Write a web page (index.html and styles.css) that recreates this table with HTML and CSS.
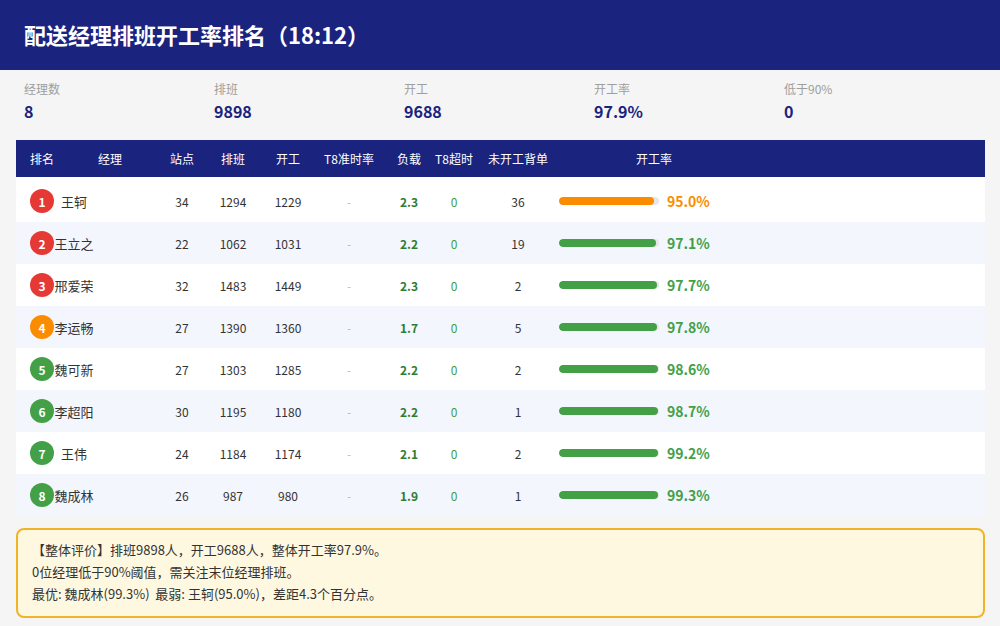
FILE: index.html
```html
<!DOCTYPE html>
<html lang="zh-CN">
<head>
<meta charset="utf-8">
<title>配送经理排班开工率排名</title>
<link rel="stylesheet" href="styles.css">
</head>
<body>
<header class="topbar">
  <h1 class="title">配送经理排班开工率排名（18:12）</h1>
</header>
<section class="stats">
  <div class="stat"><div class="stat-label">经理数</div><div class="stat-value">8</div></div>
  <div class="stat"><div class="stat-label">排班</div><div class="stat-value">9898</div></div>
  <div class="stat"><div class="stat-label">开工</div><div class="stat-value">9688</div></div>
  <div class="stat"><div class="stat-label">开工率</div><div class="stat-value">97.9%</div></div>
  <div class="stat"><div class="stat-label">低于90%</div><div class="stat-value">0</div></div>
</section>
<section class="table">
  <div class="thead">
    <div class="th th-rank">排名</div>
    <div class="th th-name">经理</div>
    <div class="th">站点</div>
    <div class="th">排班</div>
    <div class="th">开工</div>
    <div class="th">T8准时率</div>
    <div class="th spacer"></div>
    <div class="th">负载</div>
    <div class="th">T8超时</div>
    <div class="th">未开工背单</div>
    <div class="th th-rate">开工率</div>
  </div>
  <div class="tbody">
    <div class="tr">
      <div class="td td-rank"><span class="badge red">1</span></div>
      <div class="td td-name">王轲</div><div class="td spacer"></div>
      <div class="td">34</div><div class="td">1294</div><div class="td">1229</div>
      <div class="td dash">-</div><div class="td spacer"></div>
      <div class="td load">2.3</div><div class="td late">0</div><div class="td">36</div>
      <div class="td td-rate"><span class="bar"><span class="fill orange" style="width:95%"></span></span><span class="pct orange-t">95.0%</span></div>
    </div>
    <div class="tr">
      <div class="td td-rank"><span class="badge red">2</span></div>
      <div class="td td-name">王立之</div><div class="td spacer"></div>
      <div class="td">22</div><div class="td">1062</div><div class="td">1031</div>
      <div class="td dash">-</div><div class="td spacer"></div>
      <div class="td load">2.2</div><div class="td late">0</div><div class="td">19</div>
      <div class="td td-rate"><span class="bar"><span class="fill green" style="width:97.1%"></span></span><span class="pct green-t">97.1%</span></div>
    </div>
    <div class="tr">
      <div class="td td-rank"><span class="badge red">3</span></div>
      <div class="td td-name">邢爱荣</div><div class="td spacer"></div>
      <div class="td">32</div><div class="td">1483</div><div class="td">1449</div>
      <div class="td dash">-</div><div class="td spacer"></div>
      <div class="td load">2.3</div><div class="td late">0</div><div class="td">2</div>
      <div class="td td-rate"><span class="bar"><span class="fill green" style="width:97.7%"></span></span><span class="pct green-t">97.7%</span></div>
    </div>
    <div class="tr">
      <div class="td td-rank"><span class="badge orange">4</span></div>
      <div class="td td-name">李运畅</div><div class="td spacer"></div>
      <div class="td">27</div><div class="td">1390</div><div class="td">1360</div>
      <div class="td dash">-</div><div class="td spacer"></div>
      <div class="td load">1.7</div><div class="td late">0</div><div class="td">5</div>
      <div class="td td-rate"><span class="bar"><span class="fill green" style="width:97.8%"></span></span><span class="pct green-t">97.8%</span></div>
    </div>
    <div class="tr">
      <div class="td td-rank"><span class="badge green">5</span></div>
      <div class="td td-name">魏可新</div><div class="td spacer"></div>
      <div class="td">27</div><div class="td">1303</div><div class="td">1285</div>
      <div class="td dash">-</div><div class="td spacer"></div>
      <div class="td load">2.2</div><div class="td late">0</div><div class="td">2</div>
      <div class="td td-rate"><span class="bar"><span class="fill green" style="width:98.6%"></span></span><span class="pct green-t">98.6%</span></div>
    </div>
    <div class="tr">
      <div class="td td-rank"><span class="badge green">6</span></div>
      <div class="td td-name">李超阳</div><div class="td spacer"></div>
      <div class="td">30</div><div class="td">1195</div><div class="td">1180</div>
      <div class="td dash">-</div><div class="td spacer"></div>
      <div class="td load">2.2</div><div class="td late">0</div><div class="td">1</div>
      <div class="td td-rate"><span class="bar"><span class="fill green" style="width:98.7%"></span></span><span class="pct green-t">98.7%</span></div>
    </div>
    <div class="tr">
      <div class="td td-rank"><span class="badge green">7</span></div>
      <div class="td td-name">王伟</div><div class="td spacer"></div>
      <div class="td">24</div><div class="td">1184</div><div class="td">1174</div>
      <div class="td dash">-</div><div class="td spacer"></div>
      <div class="td load">2.1</div><div class="td late">0</div><div class="td">2</div>
      <div class="td td-rate"><span class="bar"><span class="fill green" style="width:99.2%"></span></span><span class="pct green-t">99.2%</span></div>
    </div>
    <div class="tr">
      <div class="td td-rank"><span class="badge green">8</span></div>
      <div class="td td-name">魏成林</div><div class="td spacer"></div>
      <div class="td">26</div><div class="td">987</div><div class="td">980</div>
      <div class="td dash">-</div><div class="td spacer"></div>
      <div class="td load">1.9</div><div class="td late">0</div><div class="td">1</div>
      <div class="td td-rate"><span class="bar"><span class="fill green" style="width:99.3%"></span></span><span class="pct green-t">99.3%</span></div>
    </div>
  </div>
</section>
<section class="summary">
  <p>【整体评价】排班9898人，开工9688人，整体开工率97.9%。</p>
  <p>0位经理低于90%阈值，需关注末位经理排班。</p>
  <p>最优: 魏成林(99.3%)&nbsp; 最弱: 王轲(95.0%)，差距4.3个百分点。</p>
</section>
</body>
</html>
```
FILE: styles.css
```css
* { box-sizing: border-box; }
html, body {
  margin: 0;
  padding: 0;
  background: #f5f5f5;
  font-family: "Noto Sans CJK SC", "Noto Sans", sans-serif;
  color: #333;
}
.topbar {
  height: 70px;
  background: #1a237e;
  display: flex;
  align-items: center;
  padding: 0 24px 2px;
}
.title {
  margin: 0;
  color: #fff;
  font-size: 22px;
  font-weight: 700;
  line-height: 1;
}
.stats {
  display: flex;
  padding: 10px 0 16px 24px;
}
.stat { width: 190px; }
.stat-label {
  font-size: 12px;
  line-height: 18px;
  color: #9e9e9e;
}
.stat-value {
  font-size: 16px;
  line-height: 26px;
  font-weight: 700;
  color: #1a237e;
}
.table {
  margin: 0 15px 0 16px;
}
.thead, .tr {
  display: grid;
  grid-template-columns: 38px 40px 63px 50px 52px 58px 64px 8px 40px 50px 78px 1fr;
  align-items: center;
}
.thead {
  height: 37px;
  background: #1a237e;
  color: #fff;
  font-size: 12px;
}
.th { text-align: center; white-space: nowrap; display: flex; justify-content: center; }
.th-rank { justify-content: flex-start; padding-left: 14px; }
.th-name { grid-column: span 2; justify-content: flex-start; padding-left: 44px; }
.th-rate { justify-content: flex-start; padding-left: 79px; }
.tbody { padding-top: 3px; background: #fff; }
.tr {
  height: 42px;
  background: #fff;
  font-size: 12px;
}
.tr:nth-child(even) { background: #f3f6fc; }
.td { display: flex; justify-content: center; align-items: center; white-space: nowrap; }
.td-rank { justify-content: flex-start; padding-left: 14px; }
.td-name { font-size: 13px; color: #333; }
.badge {
  width: 24px;
  height: 24px;
  border-radius: 50%;
  color: #fff;
  font-weight: 700;
  font-size: 12px;
  display: flex;
  align-items: center;
  justify-content: center;
}
.badge.red { background: #e53935; }
.badge.orange { background: #fb8c00; }
.badge.green { background: #43a047; }
.dash { color: #bdbdbd; }
.load { color: #2e7d32; font-weight: 700; }
.late { color: #43a047; }
.td-rate { justify-content: flex-start; padding-left: 2px; gap: 8px; }
.bar {
  width: 100px;
  height: 8px;
  border-radius: 4px;
  background: #e6e6e6;
  display: block;
  overflow: hidden;
}
.fill { display: block; height: 100%; border-radius: 4px; }
.fill.orange { background: #fb8c00; }
.fill.green { background: #43a047; }
.pct { font-size: 14px; font-weight: 700; }
.orange-t { color: #fb8c00; }
.green-t { color: #43a047; }
.summary {
  margin: 12px 15px 0 16px;
  height: 90px;
  border: 2px solid #f0b429;
  border-radius: 8px;
  background: #fff8e1;
  padding: 9px 14px;
  font-size: 13px;
  line-height: 22px;
  color: #333;
}
.summary p { margin: 0; }
```
